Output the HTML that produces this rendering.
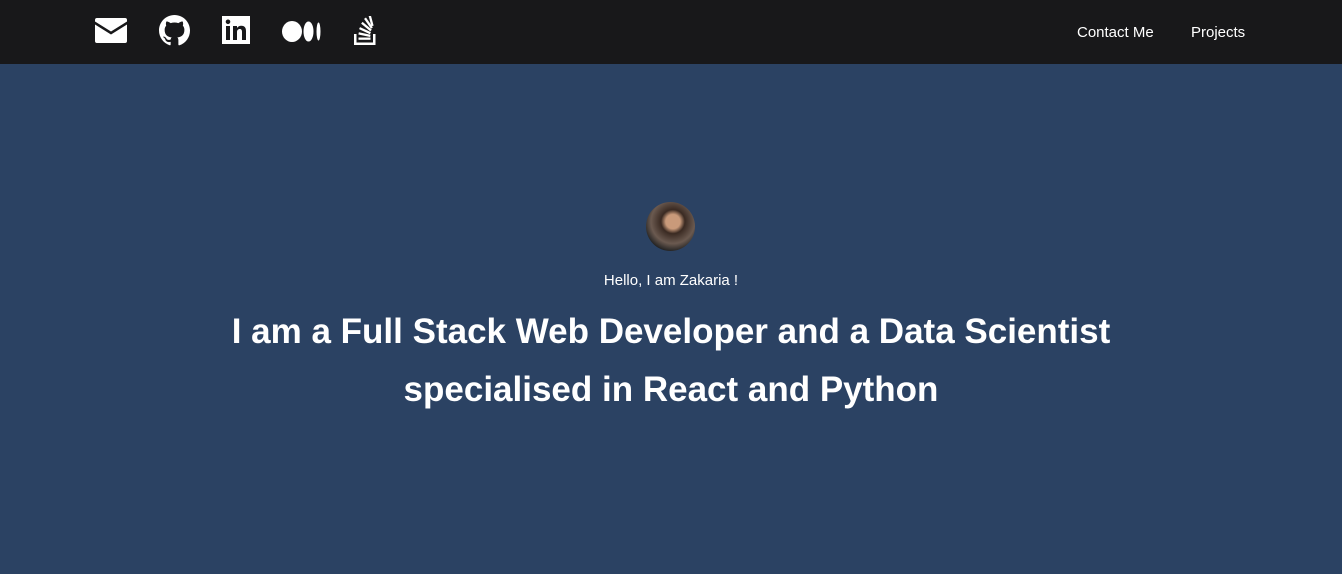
<!DOCTYPE html>
<html><head><style>
*{margin:0;padding:0;box-sizing:border-box}
body{width:1342px;height:574px;background:#2b4263;font-family:"Liberation Sans",sans-serif;color:#fff;overflow:hidden}
nav{height:64px;background:#18181a;position:relative}
nav svg{position:absolute;fill:#fff}
.links{position:absolute;top:24px;font-size:15px}
.av{position:absolute;left:646px;top:202px;width:49px;height:49px;border-radius:50%;background:radial-gradient(circle at 55% 40%,#c99a7a 0 18%,#3a2a22 30%,#6b5a50 55%,#222 75%);overflow:hidden}
.hello{position:absolute;top:272px;width:1342px;text-align:center;font-size:15px}
h1{position:absolute;top:303px;width:1342px;text-align:center;font-size:35px;line-height:58px;font-weight:bold}
</style></head><body>
<nav>
<svg style="left:95px;top:18px" width="32" height="25" viewBox="0 0 32 25"><path d="M2 0h28a2 2 0 0 1 2 2v1.5L16 13.5 0 3.5V2a2 2 0 0 1 2-2zM0 6.5l16 10 16-10V23a2 2 0 0 1-2 2H2a2 2 0 0 1-2-2z"/></svg>
<svg style="left:159px;top:15px" width="31" height="31" viewBox="0 0 16 16"><path d="M8 0C3.58 0 0 3.58 0 8c0 3.54 2.29 6.53 5.47 7.59.4.07.55-.17.55-.38v-1.33c-2.23.48-2.7-1.07-2.7-1.07-.36-.92-.89-1.17-.89-1.17-.73-.5.05-.49.05-.49.8.06 1.23.83 1.23.83.72 1.22 1.870.87 2.330.66.07-.52.28-.87.51-1.07-1.78-.2-3.64-.89-3.64-3.95 0-.87.31-1.59.82-2.15-.08-.2-.36-1.02.08-2.12 0 0 .67-.21 2.2.82a7.7 7.7 0 0 1 4 0c1.53-1.04 2.2-.82 2.2-.82.44 1.1.16 1.92.08 2.12.51.56.82 1.27.82 2.150 0 3.07-1.87 3.75-3.65 3.95.29.25.54.73.54 1.48v2.2c0 .21.15.46.55.38A8.01 8.01 0 0 0 16 8c0-4.42-3.58-8-8-8z"/></svg>
<svg style="left:222px;top:16px" width="28" height="28" viewBox="0 0 28 28"><path d="M0 0h28v28H0z"/><path fill="#18181a" d="M4 10h4v14H4zM6 3.5a2.3 2.3 0 1 1 0 4.6 2.3 2.3 0 0 1 0-4.6zM11 10h4v2c.8-1.4 2.3-2.3 4.3-2.3 3.5 0 4.7 2 4.7 5.5V24h-4v-8c0-1.8-.5-3-2.2-3s-2.8 1.2-2.8 3v8h-4z"/></svg>
<svg style="left:282px;top:21px" width="40" height="21" viewBox="0 0 40 21"><ellipse cx="10" cy="10.5" rx="10" ry="10.5"/><ellipse cx="26.5" cy="10.5" rx="5" ry="10"/><ellipse cx="36.5" cy="10.5" rx="2" ry="9"/></svg>
<svg style="left:354px;top:16px" width="24" height="29" viewBox="0 0 24 29">
<path d="M0 18h2.5v8.5h16.5V18h2.5v11H0z"/>
<rect x="4.5" y="21.5" width="12" height="2.3"/>
<rect x="4.5" y="17.5" width="12" height="2.3" transform="rotate(12 10.5 18.6)"/>
<rect x="5" y="13.5" width="12" height="2.3" transform="rotate(25 11 14.6)"/>
<rect x="6.5" y="9.5" width="12" height="2.3" transform="rotate(40 12.5 10.6)"/>
<rect x="8.5" y="6" width="12" height="2.3" transform="rotate(55 14.5 7.1)"/>
<rect x="11" y="3" width="12" height="2.3" transform="rotate(75 17 4.1)"/>
</svg>
<div class="links" style="left:1077px">Contact Me</div>
<div class="links" style="left:1191px">Projects</div>
</nav>
<div class="av"></div>
<div class="hello">Hello, I am Zakaria !</div>
<h1>I am a Full Stack Web Developer and a Data Scientist<br>specialised in React and Python</h1>
</body></html>
